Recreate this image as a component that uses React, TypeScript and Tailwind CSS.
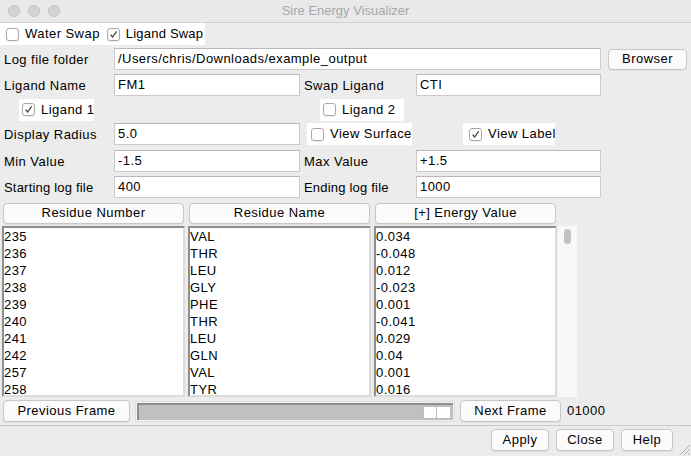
import React from "react"

const rows = [
  ["235", "VAL", "0.034"],
  ["236", "THR", "-0.048"],
  ["237", "LEU", "0.012"],
  ["238", "GLY", "-0.023"],
  ["239", "PHE", "0.001"],
  ["240", "THR", "-0.041"],
  ["241", "LEU", "0.029"],
  ["242", "GLN", "0.04"],
  ["257", "VAL", "0.001"],
  ["258", "TYR", "0.016"],
]

const Check = ({ checked }: { checked?: boolean }) => (
  <span className="w-[13px] h-[13px] shrink-0 rounded-[3px] border border-[#a9a9a9] bg-white flex items-center justify-center shadow-[0_1px_1px_rgba(0,0,0,0.08)]">
    {checked && (
      <svg width="9" height="9" viewBox="0 0 9 9">
        <path d="M1.6 4.6 L3.6 7 L7.6 1.4" stroke="#3a3a3a" strokeWidth="1.2" fill="none" />
      </svg>
    )}
  </span>
)

const CheckItem = ({ label, checked, className = "" }: { label: string; checked?: boolean; className?: string }) => (
  <div className={`h-[22px] bg-white flex items-center gap-[6px] pl-[3px] whitespace-nowrap shrink-0 ${className}`}>
    <Check checked={checked} />
    <span>{label}</span>
  </div>
)

const Field = ({ value, className = "" }: { value: string; className?: string }) => (
  <div className={`h-[22px] bg-white border border-[#cbcbcb] border-t-[#b9b9b9] pl-[3px] flex items-center shrink-0 ${className}`}>
    {value}
  </div>
)

const Btn = ({ label, className = "" }: { label: string; className?: string }) => (
  <div className={`h-[21px] rounded-[4px] border border-[#c6c6c6] bg-[#fbfbfb] shadow-[0_1px_0_rgba(0,0,0,0.06)] flex items-center justify-center whitespace-nowrap shrink-0 ${className}`}>
    {label}
  </div>
)

const Column = ({ header, idx }: { header: string; idx: number }) => (
  <div className="flex flex-col w-[183px]">
    <div className="h-[26px] flex items-center px-[1px]">
      <Btn label={header} className="w-full" />
    </div>
    <div className="h-[171px] bg-white border-2 border-t-[#8e8e8e] border-l-[#8e8e8e] border-r-[#dcdcdc] border-b-[#dcdcdc] leading-[17px] overflow-hidden">
      {rows.map((r) => (
        <div key={r[0]}>{r[idx]}</div>
      ))}
    </div>
  </div>
)

export default function App() {
  return (
    <div className="w-[691px] h-[456px] bg-[#ececec] text-[13px] text-black overflow-hidden relative" style={{ fontFamily: '"Liberation Sans", Arial, sans-serif' }}>
      {/* title bar */}
      <div className="h-[23px] border-b border-[#d2d2d2] bg-[#e9e9e9] flex items-center relative">
        <div className="flex gap-[8px] pl-[8px]">
          <span className="w-[12px] h-[12px] rounded-full bg-[#d3d3d3] border border-[#c4c4c4]" />
          <span className="w-[12px] h-[12px] rounded-full bg-[#d3d3d3] border border-[#c4c4c4]" />
          <span className="w-[12px] h-[12px] rounded-full bg-[#d3d3d3] border border-[#c4c4c4]" />
        </div>
        <div className="absolute inset-0 flex items-center justify-center text-[#a8a8a8]">Sire Energy Visualizer</div>
      </div>

      <div className="tracking-[0.45px]">
        {/* swap toggles */}
        <div className="h-[23px] flex items-start">
          <div className="h-[22px] bg-white flex items-center pr-[2px]">
            <CheckItem label="Water Swap" className="pl-[6px]" />
            <CheckItem label="Ligand Swap" className="ml-[4px] pl-0 tracking-[0.2px]" checked />
          </div>
        </div>

        <div className="h-[26px] flex items-center">
          <span className="w-[114px] pl-[4px] pt-[2px]">Log file folder</span>
          <Field value="/Users/chris/Downloads/example_output" className="w-[487px]" />
          <Btn label="Browser" className="ml-[7px] w-[79px] h-[20px]" />
        </div>

        <div className="h-[26px] flex items-center">
          <span className="w-[114px] pl-[4px] pt-[2px]">Ligand Name</span>
          <Field value="FM1" className="w-[186px]" />
          <span className="w-[116px] pl-[4px] pt-[2px]">Swap Ligand</span>
          <Field value="CTI" className="w-[185px]" />
        </div>

        <div className="h-[23px] flex items-center">
          <CheckItem label="Ligand 1" checked className="ml-[19px] w-[75px]" />
          <CheckItem label="Ligand 2" className="ml-[226px] w-[84px]" />
        </div>

        <div className="h-[26px] flex items-center">
          <span className="w-[114px] pl-[4px] pt-[2px]">Display Radius</span>
          <Field value="5.0" className="w-[186px]" />
          <CheckItem label="View Surface" className="ml-[7px] w-[105px] pl-[4px]" />
          <CheckItem label="View Label" checked className="ml-[51px] w-[92px] pl-[6px]" />
        </div>

        <div className="h-[27px] flex items-center">
          <span className="w-[114px] pl-[4px] pt-[2px]">Min Value</span>
          <Field value="-1.5" className="w-[186px]" />
          <span className="w-[116px] pl-[4px] pt-[2px]">Max Value</span>
          <Field value="+1.5" className="w-[185px]" />
        </div>

        <div className="h-[26px] flex items-center">
          <span className="w-[114px] pl-[4px] pt-[2px] tracking-[0.2px]">Starting log file</span>
          <Field value="400" className="w-[186px]" />
          <span className="w-[116px] pl-[4px] pt-[2px] tracking-[0.2px]">Ending log file</span>
          <Field value="1000" className="w-[185px]" />
        </div>

        {/* residue table */}
        <div className="flex pl-[2px] gap-[3px]">
          <Column header="Residue Number" idx={0} />
          <Column header="Residue Name" idx={1} />
          <Column header="[+] Energy Value" idx={2} />
          <div className="flex flex-col -ml-[2px]">
            <div className="h-[26px]" />
            <div className="h-[171px] w-[19px] bg-[#f8f8f8] pt-[3px] pl-[6px]">
              <div className="w-[7px] h-[15px] rounded-full bg-[#c2c2c2]" />
            </div>
          </div>
        </div>

        {/* frame navigation */}
        <div className="h-[28px] flex items-center">
          <Btn label="Previous Frame" className="ml-[3px] w-[127px] h-[22px]" />
          <div className="ml-[5px] w-[320px] h-[21px] border border-[#dedede] bg-[#f2f2f2] p-[1px]">
            <div className="h-full bg-[#c0c0c0] border-t-2 border-l-2 border-[#8e8e8e] flex items-center justify-end pr-[2px]">
              <div className="flex h-[13px]">
                <span className="w-[14px] h-full bg-white border border-[#bdbdbd]" />
                <span className="w-[14px] h-full bg-white border border-[#bdbdbd] border-l-0" />
              </div>
            </div>
          </div>
          <Btn label="Next Frame" className="ml-[5px] w-[101px] h-[22px]" />
          <span className="ml-[6px]">01000</span>
        </div>
      </div>

      <div className="border-t border-[#c9c9c9]" />

      <div className="h-[30px] flex items-center justify-end pr-[18px] gap-[7px] tracking-[0.45px] pb-[2px]">
        <Btn label="Apply" className="w-[58px] h-[22px]" />
        <Btn label="Close" className="w-[58px] h-[22px]" />
        <Btn label="Help" className="w-[52px] h-[22px]" />
      </div>

      {/* resize grip */}
      <svg className="absolute right-0 bottom-0" width="14" height="14" viewBox="0 0 14 14">
        <path d="M13 3 L3 13 M13 7 L7 13 M13 11 L11 13" stroke="#b0b0b0" strokeWidth="1" />
      </svg>
    </div>
  )
}
